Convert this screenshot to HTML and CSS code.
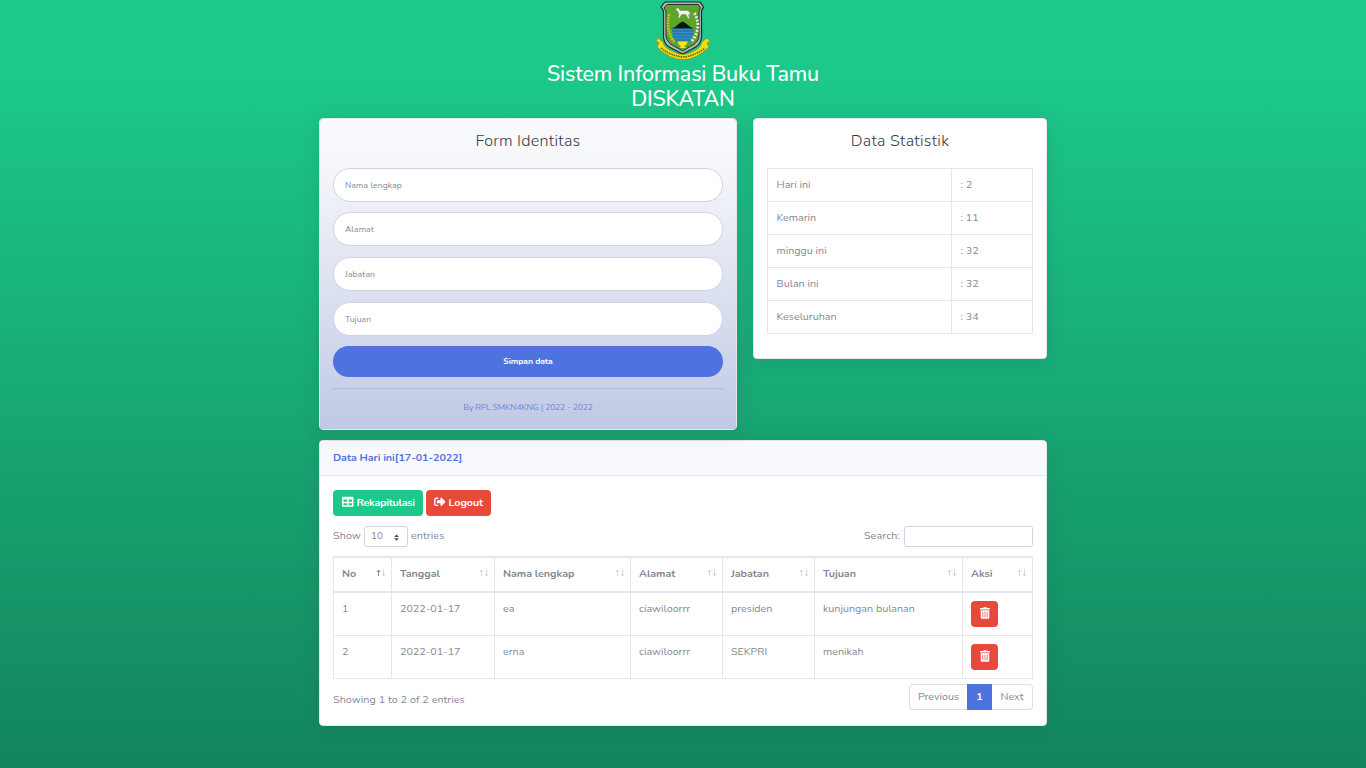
FILE: index.html
```html
<!DOCTYPE html>
<html lang="id">
<head>
<meta charset="utf-8">
<title>Buku Tamu</title>
<link rel="stylesheet" href="styles.css">
</head>
<body>
<svg class="defs" width="0" height="0">
  <symbol id="trash" viewBox="0 0 448 512"><path d="M32 464a48 48 0 0 0 48 48h288a48 48 0 0 0 48-48V128H32zm272-256a16 16 0 0 1 32 0v224a16 16 0 0 1-32 0zm-96 0a16 16 0 0 1 32 0v224a16 16 0 0 1-32 0zm-96 0a16 16 0 0 1 32 0v224a16 16 0 0 1-32 0zM432 32H312l-9.4-18.7A24 24 0 0 0 281.1 0H166.8a23.72 23.72 0 0 0-21.4 13.3L136 32H16A16 16 0 0 0 0 48v32a16 16 0 0 0 16 16h416a16 16 0 0 0 16-16V48a16 16 0 0 0-16-16z"/></symbol>
  <symbol id="sort" viewBox="0 0 10 9"><path class="up" d="M2.500 7V1M.8 3L2.500 1 4.200 3"/><path class="down" d="M7.500 0v7M5.800 5l1.700 2L9.200 5"/></symbol>
</svg>
<main class="container">
  <header class="head">
    <svg class="logo" viewBox="0 0 56 61">
      <path d="M10 2H45L48.500 7 46.500 11V37Q46 45 38 48.500L27.700 54 17 48.500Q9 45 8.500 37V11L6 7Z" fill="#aeb7bd" stroke="#202725" stroke-width="1.200"/>
      <path d="M12 4.500H43.500L45.500 8 44 11V36Q43 43 36 46L27.700 51 19 46Q12 43 11 36V11L9 8Z" fill="#5ba52b" stroke="#26332a" stroke-width="1"/>
      <path d="M17.200 28H38.500V34Q37 40 33 43H22Q18 39 17.200 34Z" fill="#368cc4"/>
      <path d="M17 31H38.500M17.500 34H38M18 37H37M20 40H35" stroke="#17608e" stroke-width=".8"/>
      <path d="M16.800 28.500Q21 27 24 23.500L27.500 21.500 31 23.500Q35 27 38.500 28.500Z" fill="#10130e"/>
      <path d="M22.500 41.500H33L31 45 29 46 31 48H24.500L26 46 24 45Z" fill="#ffe51c"/>
      <path d="M20.500 9.500L23 7.500 25 10.500H32.500L35 12.500V15.500L33.500 14 34.500 18.500H33L31 14.500H26.500L24.500 18H23L24 14.500 22.500 11Z" fill="#f3f3eb" stroke="#6f7a68" stroke-width=".4"/>
      <path d="M14 14C12 23 12 33 19.500 42" fill="none" stroke="#c9c026" stroke-width="2.700" stroke-dasharray="2 .8"/>
      <path d="M39.500 13C45 23 43.500 34 36 42" fill="none" stroke="#e9f0e4" stroke-width="2.800" stroke-dasharray="2 1.500"/>
      <path d="M3 38L1 41 4 43 2 47Q15 60 28 59.500 41 60 54 47L52 43 55 41 52 38 47 42Q46 48 39 51 28 58 17 51 9 48 8 42Z" fill="#f2dc15" stroke="#927f12" stroke-width=".6"/>
      <path d="M6 48Q16 56 28 57 40 56 50 48" fill="none" stroke="#655b12" stroke-width="1.500" stroke-dasharray="1.600 .8"/>
    </svg>
    <h1>Sistem Informasi Buku Tamu<br>DISKATAN</h1>
  </header>
  <div class="row">
    <section class="card form-card">
      <h2>Form Identitas</h2>
      <form>
        <input placeholder="Nama lengkap"><input placeholder="Alamat"><input placeholder="Jabatan"><input placeholder="Tujuan">
        <button type="button" class="save">Simpan data</button>
      </form>
      <hr>
      <p class="by"><span>By RPL SMKN4KNG | 2022 - 2022</span></p>
    </section>
    <section class="card stat-card">
      <h2>Data Statistik</h2>
      <table class="stats">
        <tr><td>Hari ini</td><td>: 2</td></tr>
        <tr><td>Kemarin</td><td>: 11</td></tr>
        <tr><td>minggu ini</td><td>: 32</td></tr>
        <tr><td>Bulan ini</td><td>: 32</td></tr>
        <tr><td>Keseluruhan</td><td>: 34</td></tr>
      </table>
    </section>
  </div>
  <section class="card data-card">
    <div class="card-header"><span>Data Hari ini[17-01-2022]</span></div>
    <div class="card-body">
      <div class="actions">
        <a class="btn green"><svg viewBox="0 0 512 512"><path d="M464 32H48C21.490 32 0 53.490 0 80v352c0 26.510 21.490 48 48 48h416c26.510 0 48-21.490 48-48V80c0-26.510-21.490-48-48-48zM224 416H64v-96h160v96zm0-160H64v-96h160v96zm224 160H288v-96h160v96zm0-160H288v-96h160v96z"/></svg><span>Rekapitulasi</span></a>
        <a class="btn red"><svg viewBox="0 0 512 512"><path d="M497 273L329 441c-15 15-41 4.500-41-17v-96H152c-13.300 0-24-10.700-24-24v-96c0-13.300 10.700-24 24-24h136V88c0-21.400 25.900-32 41-17l168 168c9.300 9.400 9.300 24.600 0 34zM192 436v-40c0-6.600-5.400-12-12-12H96c-17.700 0-32-14.300-32-32V160c0-17.700 14.300-32 32-32h84c6.600 0 12-5.400 12-12V76c0-6.600-5.400-12-12-12H96c-53 0-96 43-96 96v192c0 53 43 96 96 96h84c6.600 0 12-5.400 12-12z"/></svg><span>Logout</span></a>
      </div>
      <div class="controls">
        <div class="length"><span>Show</span><div class="select"><span>10</span><svg viewBox="0 0 4 5"><path d="M2 0L0 2h4zm0 5L0 3h4z"/></svg></div><span>entries</span></div>
        <label class="search"><span>Search:</span><input></label>
      </div>
      <table class="data">
        <colgroup><col class="c1"><col class="c2"><col class="c3"><col class="c4"><col class="c5"><col class="c6"><col class="c7"></colgroup>
        <thead><tr>
          <th><div>No<svg class="sort asc"><use href="#sort"/></svg></div></th>
          <th><div>Tanggal<svg class="sort"><use href="#sort"/></svg></div></th>
          <th><div>Nama lengkap<svg class="sort"><use href="#sort"/></svg></div></th>
          <th><div>Alamat<svg class="sort"><use href="#sort"/></svg></div></th>
          <th><div>Jabatan<svg class="sort"><use href="#sort"/></svg></div></th>
          <th><div>Tujuan<svg class="sort"><use href="#sort"/></svg></div></th>
          <th><div>Aksi<svg class="sort"><use href="#sort"/></svg></div></th>
        </tr></thead>
        <tbody>
          <tr><td>1</td><td>2022-01-17</td><td>ea</td><td>ciawiloorrr</td><td>presiden</td><td>kunjungan bulanan</td><td><a class="del"><svg><use href="#trash"/></svg></a></td></tr>
          <tr><td>2</td><td>2022-01-17</td><td>erna</td><td>ciawiloorrr</td><td>SEKPRI</td><td>menikah</td><td><a class="del"><svg><use href="#trash"/></svg></a></td></tr>
        </tbody>
      </table>
      <div class="foot">
        <span class="info">Showing 1 to 2 of 2 entries</span>
        <div class="pages"><span class="prev">Previous</span><span class="cur">1</span><span class="next">Next</span></div>
      </div>
    </div>
  </section>
</main>
</body>
</html>
```
FILE: styles.css
```css
* { box-sizing: border-box; }
body {
  margin: 0;
  height: 768px;
  overflow: hidden;
  background: linear-gradient(180deg, #1cc88a 10%, #13855c 100%);
  font: 400 10.720px/16px Nunito, Lato, sans-serif;
  color: #858796;
}
.defs { display: none; }
.container { width: 728px; margin: 0 auto; }
.head { height: 118px; display: flex; flex-direction: column; align-items: center; text-align: center; color: #fff; }
.logo { width: 56px; height: 61px; }
h1 { margin: 1px 0 0; font-size: 21.440px; line-height: 25px; font-weight: 500; letter-spacing: -.15px; }
.row { display: flex; gap: 16px; align-items: flex-start; }
.card { border: 1px solid #e3e6f0; border-radius: 4px; background: #fff; box-shadow: 0 2px 19px rgba(58,59,69,.15); }
.form-card { width: 418px; height: 312px; padding: 12px 13px; background: linear-gradient(180deg, #f8f9fc 10%, #c0c9e4 100%); background-clip: padding-box; }
.stat-card { width: 294px; height: 241px; padding: 12px 13px; }
h2 { margin: 0 0 17px; font-size: 16.080px; line-height: 20px; font-weight: 300; letter-spacing: .25px; color: #3a3b45; text-align: center; }
form { display: flex; flex-direction: column; }
form input {
  height: 34px; margin: 0 0 11px; padding: 0 11px; border: 1px solid #d1d3e2; border-radius: 17px;
  background: #fff; font: inherit; font-size: 8.580px; letter-spacing: .1px;
}
form input:first-child { margin-bottom: 10px; }
form input::placeholder { color: #858796; opacity: 1; }
.save { height: 31px; margin-top: -1px; padding: 0 0 1px; border: 0; border-radius: 16px; background: #4e73df; color: #fff; font: inherit; font-size: 8.580px; font-weight: 700; letter-spacing: -.07px; }
hr { margin: 11px 0 10px; border: 0; border-top: 1px solid #b1b9d0; }
.by { margin: 0; text-align: center; color: #6f83dc; font-size: 8.580px; letter-spacing: -.15px; }
table { border-collapse: collapse; table-layout: fixed; }
.stats { width: 266px; }
.stats td { height: 33px; padding: 0 8px 0 8.500px; border: 1px solid #e3e6f0; }
.stats td:first-child { width: 184px; }
.data-card { margin-top: 10px; height: 286px; }
.card-header { height: 35px; padding: 9px 13px 8px; background: #f8f9fc; border-bottom: 1px solid #e3e6f0; border-radius: 3px 3px 0 0; color: #4e73df; font-weight: 700; letter-spacing: -.07px; }
.card-body { padding: 14px 13px 0; }
.actions { display: flex; gap: 3px; }
.btn { display: flex; align-items: center; height: 26px; padding: 0 9px; gap: 3px; border-radius: 4px; color: #fff; font-weight: 700; letter-spacing: -.25px; white-space: nowrap; }
.btn svg { width: 11.500px; height: 11.500px; margin-top: -2px; fill: #fff; flex: none; }
.green { width: 90px; background: #1cc88a; }
.red { width: 65px; padding-left: 8px; letter-spacing: -.1px; background: #e74a3b; }
.controls { display: flex; justify-content: space-between; margin-top: 10px; height: 21px; }
.length { display: flex; gap: 3px; line-height: 19px; letter-spacing: .1px; }
.select { display: flex; justify-content: space-between; align-items: center; width: 44px; height: 21px; padding: 0 8px 0 6px; border: 1px solid #d1d3e2; border-radius: 3px; font-size: 10px; }
.select svg { width: 5px; height: 7px; margin-top: 2px; fill: #4b4c58; }
.search { display: flex; gap: 4px; line-height: 19px; letter-spacing: .12px; }
.search input { width: 129px; height: 21px; border: 1px solid #d1d3e2; border-radius: 2.500px; }
.data { width: 700px; margin-top: 9px; }
.c1 { width: 58px; } .c2 { width: 103px; } .c3 { width: 136px; } .c4, .c5 { width: 92px; } .c6 { width: 148px; } .c7 { width: 70px; }
.data th { height: 35px; padding: 0 5.500px 2px 8px; border: 1px solid #e3e6f0; border-width: 2px 1px; text-align: left; font-weight: 700; letter-spacing: -.05px; }
.data th div { display: flex; justify-content: space-between; white-space: nowrap; }
.sort { width: 10px; height: 9px; margin-top: 3px; fill: none; stroke: #d0d1da; stroke-width: .9; }
.up { stroke: var(--up, #d0d1da); }
.asc { --up: #777989; }
.data td { height: 43px; padding: 8px 8px 0; border: 1px solid #e3e6f0; vertical-align: top; }
.del { display: flex; width: 27px; height: 26px; align-items: center; justify-content: center; background: #e74a3b; border-radius: 4px; }
.del svg { width: 10px; height: 12px; margin-top: -2px; fill: #fff; }
.foot { display: flex; justify-content: space-between; margin-top: 5px; }
.info { margin-top: 8px; letter-spacing: .06px; }
.pages { display: flex; height: 26px; line-height: 24px; text-align: center; }
.pages span { border: 1px solid #dddfeb; }
.prev { width: 58px; border-radius: 4px 0 0 4px; border-right: 0 !important; }
.pages .cur { width: 25px; background: #4e73df; color: #fff; border-color: #4e73df; font-weight: 700; }
.next { width: 41px; border-radius: 0 4px 4px 0; border-left: 0 !important; }
```
